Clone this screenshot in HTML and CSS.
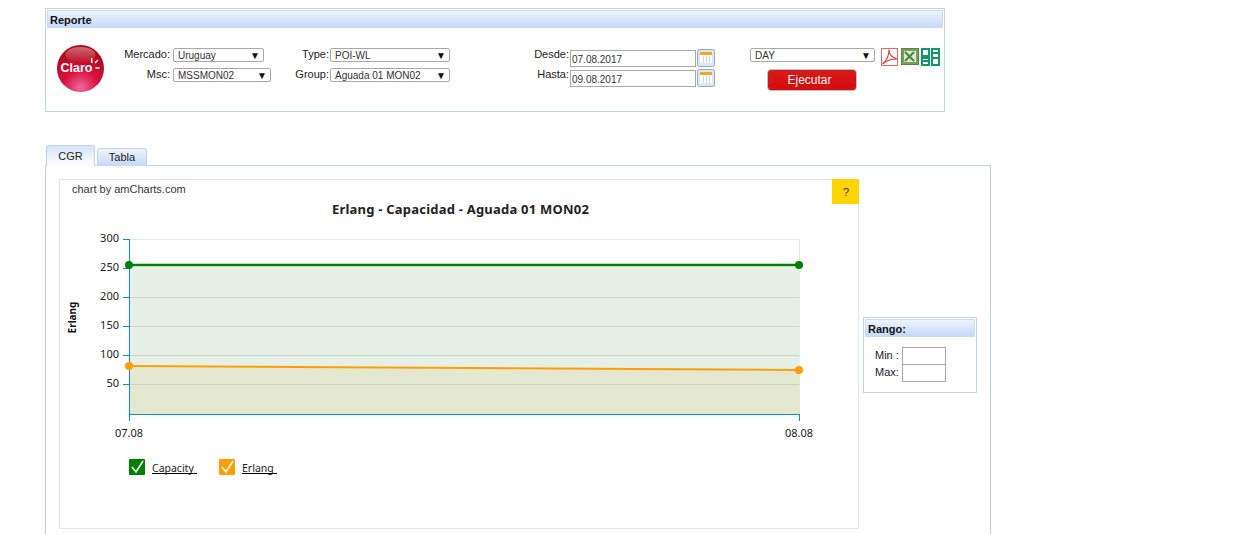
FILE: index.html
```html
<!DOCTYPE html>
<html lang="es">
<head>
    <meta charset="UTF-8">
    <title>Reporte</title>
    <link rel="stylesheet" href="styles.css">
</head>
<body>
<div id="reporte" class="panel">
    <div class="panel_head">Reporte</div>
    <div class="filtros">
        <svg class="logo" width="47" height="47" viewBox="0 0 47 47">
            <defs>
                <radialGradient id="rojo" cx="50%" cy="90%" r="75%">
                    <stop offset="0" stop-color="#f0689a"/>
                    <stop offset="0.5" stop-color="#d80f3a"/>
                    <stop offset="1" stop-color="#b00a1e"/>
                </radialGradient>
                <linearGradient id="brillo" x1="0" y1="0" x2="0" y2="1">
                    <stop offset="0" stop-color="#fff" stop-opacity="0.4"/>
                    <stop offset="1" stop-color="#fff" stop-opacity="0"/>
                </linearGradient>
            </defs>
            <circle cx="23.500" cy="23.500" r="23.500" fill="url(#rojo)"/>
            <ellipse cx="23.500" cy="10" rx="15" ry="8" fill="url(#brillo)"/>
            <text x="3.500" y="27" class="logo_txt">Claro</text>
            <path d="M34.700 13v5M38 18l3-3M38.500 23h4" stroke="#fff" stroke-width="1.500" fill="none"/>
        </svg>
        <div class="campos campos_mercado">
            <label>Mercado:</label>
            <div class="combo combo_a"><span>Uruguay</span><i>▼</i></div>
            <label>Msc:</label>
            <div class="combo combo_b"><span>MSSMON02</span><i>▼</i></div>
        </div>
        <div class="campos campos_type">
            <label>Type:</label>
            <div class="combo combo_c"><span>POI-WL</span><i>▼</i></div>
            <label>Group:</label>
            <div class="combo combo_c"><span>Aguada 01 MON02</span><i>▼</i></div>
        </div>
        <div class="campos campos_fecha">
            <label>Desde:</label>
            <div class="fecha">
                <input type="text" value="07.08.2017">
                <svg class="cal" width="18" height="18" viewBox="0 0 18 18">
                    <rect x="0.500" y="0.500" width="17" height="17" rx="2" fill="#dbe7f5" stroke="#8fa8c6"/>
                    <rect x="3" y="3" width="12" height="3" fill="#f6a623"/>
                    <rect x="3" y="6" width="12" height="8" fill="#fff"/>
                    <path d="M6.500 7v7M9.500 7v7M12.500 7v7" stroke="#c8d8ec"/>
                </svg>
            </div>
            <label>Hasta:</label>
            <div class="fecha">
                <input type="text" value="09.08.2017">
                <svg class="cal" width="18" height="18" viewBox="0 0 18 18">
                    <rect x="0.500" y="0.500" width="17" height="17" rx="2" fill="#dbe7f5" stroke="#8fa8c6"/>
                    <rect x="3" y="3" width="12" height="3" fill="#f6a623"/>
                    <rect x="3" y="6" width="12" height="8" fill="#fff"/>
                    <path d="M6.500 7v7M9.500 7v7M12.500 7v7" stroke="#c8d8ec"/>
                </svg>
            </div>
        </div>
        <div class="acciones">
            <div class="combo combo_d"><span>DAY</span><i>▼</i></div>
            <button class="ejecutar">Ejecutar</button>
        </div>
        <div class="iconos">
            <svg width="17" height="18" viewBox="0 0 17 18">
                <rect x="0.500" y="0.500" width="16" height="17" fill="#fff" stroke="#e86868"/>
                <path d="M1.500 16C5 13 8 8 8 1.500c0 5 3 8 8 9.500-5 0-10 1-14.500 5z" fill="none" stroke="#e83838" stroke-width="1.100"/>
            </svg>
            <svg width="18" height="17" viewBox="0 0 18 17">
                <rect x="0.500" y="0.500" width="17" height="16" fill="#7a9e5c" stroke="#5c8542"/>
                <rect x="3" y="3" width="12" height="11" fill="#dfe8d4"/>
                <path d="M4 4l9 9M13 4l-9 9" stroke="#3f8a40" stroke-width="2"/>
            </svg>
            <svg class="icono_grid" width="19" height="18" viewBox="0 0 19 18">
                <path d="M1 1h7v7H1zM11 1h7v4h-7zM11 5h7v5h-7zM1 10h7v3H1zM1 13h7v4H1zM11 10h7v7h-7z" fill="#fff" stroke="#0f9868" stroke-width="2"/>
            </svg>
        </div>
    </div>
</div>

<div class="tabs">
    <div class="tab tab_on">CGR</div>
    <div class="tab">Tabla</div>
</div>
<div class="tab_pane">
    <div class="chart">
        <a class="ayuda">?</a>
        <svg class="chart_svg" width="798" height="348" viewBox="60 180 798 348">
            <text x="72" y="193" class="credito">chart by amCharts.com</text>
            <text x="460.500" y="214" class="titulo" text-anchor="middle">Erlang - Capacidad - Aguada 01 MON02</text>

            <path d="M129.500 239.500H799.500V414" fill="none" stroke="#e6e6e6"/>
            <rect x="130" y="267" width="670" height="147" fill="#e6f0e6"/>
            <path d="M130 367L800 371V414H130z" fill="#e5e8d0"/>
            <path d="M130 297.500H799M130 326.500H799M130 355.500H799M130 384.500H799" stroke="#000" stroke-opacity="0.1"/>

            <path d="M123 239.500H129.500M123 268.500H129.500M123 297.500H129.500M123 326.500H129.500M123 355.500H129.500M123 384.500H129.500" stroke="#0d8ecf"/>
            <path d="M129.500 239V421M129 414.500H800M799.500 414V421" fill="none" stroke="#0d8ecf"/>

            <path d="M129 265H799" stroke="#008000" stroke-width="2.500"/>
            <path d="M129 366L799 370" stroke="#ff9e01" stroke-width="2"/>
            <circle cx="129" cy="265" r="4" fill="#008000"/>
            <circle cx="799" cy="265" r="4" fill="#008000"/>
            <circle cx="129" cy="366" r="4" fill="#ff9e01"/>
            <circle cx="799" cy="370" r="4" fill="#ff9e01"/>

            <text x="119" y="242" class="eje" text-anchor="end">300</text>
            <text x="119" y="271" class="eje" text-anchor="end">250</text>
            <text x="119" y="300" class="eje" text-anchor="end">200</text>
            <text x="119" y="329" class="eje" text-anchor="end">150</text>
            <text x="119" y="358" class="eje" text-anchor="end">100</text>
            <text x="119" y="387" class="eje" text-anchor="end">50</text>
            <text x="129" y="437" class="eje" text-anchor="middle">07.08</text>
            <text x="799" y="437" class="eje" text-anchor="middle">08.08</text>
            <text transform="translate(76 317.500) rotate(-90)" class="eje_nombre" text-anchor="middle">Erlang</text>

            <rect x="129" y="459" width="16" height="16" rx="1" fill="#008000"/>
            <path d="M132 467l4 5 7-11" fill="none" stroke="#fff" stroke-width="1.600"/>
            <text x="152" y="472" class="leyenda">Capacity </text>
            <path d="M152 473.500H197" stroke="#000"/>
            <rect x="219" y="459" width="16" height="16" rx="1" fill="#ff9e01"/>
            <path d="M222 467l4 5 7-11" fill="none" stroke="#fff" stroke-width="1.600"/>
            <text x="242" y="472" class="leyenda">Erlang </text>
            <path d="M242 473.500H277" stroke="#000"/>
        </svg>
    </div>
    <div id="rango" class="panel">
        <div class="panel_head">Rango:</div>
        <div class="rango_campos">
            <label>Min :</label><input type="text">
            <label>Max:</label><input type="text">
        </div>
    </div>
</div>
</body>
</html>
```

FILE: styles.css
```css
*{
    margin: 0;
    padding: 0;
    box-sizing: border-box;
}
html,body{
    height: 534px;
    overflow: hidden;
}
body{
    background-color: #fff;
    font-family: "Liberation Sans", Arial, sans-serif;
    font-size: 12px;
    color: #222;
    padding: 8px 0 0 45px;
}
.panel{
    border: 1px solid #bdd4f2;
    padding: 1px;
    background-color: #fff;
}
.panel_head{
    height: 18px;
    line-height: 18px;
    padding-left: 2px;
    font-size: 11px;
    font-weight: bold;
    color: #111;
    background: linear-gradient(#eef4fd, #c4d9f7);
    border: 1px solid #c9dcf6;
}
#reporte{
    width: 900px;
    height: 104px;
}
.filtros{
    display: flex;
    align-items: flex-start;
    padding: 17px 0 0 10px;
}
.logo{
    flex: none;
    margin-right: 18px;
}
.logo_txt{
    font-family: "Liberation Sans", Arial, sans-serif;
    font-size: 12.500px;
    font-weight: bold;
    fill: #fff;
}
.campos{
    display: grid;
    align-items: center;
    row-gap: 6px;
    padding-top: 3px;
}
.campos label{
    text-align: right;
    font-size: 11px;
    line-height: 14px;
    white-space: nowrap;
    margin-top: -2px;
}
.campos_mercado{
    grid-template-columns: 48px auto;
    column-gap: 3px;
    justify-items: start;
}
.campos_mercado label{
    justify-self: end;
}
.campos_type{
    grid-template-columns: 58px 120px;
    column-gap: 1px;
}
.combo{
    height: 14px;
    border: 1px solid #a9a9a9;
    border-radius: 2px;
    background-color: #fff;
    display: flex;
    justify-content: space-between;
    align-items: center;
    padding: 0 3px 0 4px;
    font-size: 10px;
    color: #333;
}
.combo span{
    padding-top: 1px;
}
.combo i{
    font-style: normal;
    font-size: 10px;
    color: #111;
}
.combo_a{
    width: 91px;
}
.combo_b{
    width: 98px;
}
.combo_c{
    width: 120px;
}
.combo_d{
    width: 125px;
}
.campos_fecha{
    grid-template-columns: 40px auto;
    column-gap: 1px;
    row-gap: 2px;
    align-items: start;
    margin-left: 79px;
    padding-top: 4px;
}
.campos_fecha label{
    margin-top: -2px;
}
.fecha{
    display: flex;
    align-items: flex-start;
    gap: 1px;
}
.fecha input{
    width: 126px;
    height: 17px;
    margin-top: 1px;
    border: 1px solid #a9a9a9;
    padding: 2px 0 0 1px;
    font-family: "Liberation Sans", Arial, sans-serif;
    font-size: 10px;
    color: #333;
    outline: none;
}
.cal{
    flex: none;
}
.acciones{
    margin-left: 35px;
    padding-top: 3px;
    display: flex;
    flex-direction: column;
    align-items: center;
    gap: 7px;
}
.ejecutar{
    width: 90px;
    height: 22px;
    margin-right: 1px;
    padding: 0 5px 1px 0;
    border: 1px solid #b0c4d8;
    border-radius: 4px;
    background: linear-gradient(#d81a1a, #d40c0c);
    color: #f4f4f4;
    font-family: "Liberation Sans", Arial, sans-serif;
    font-size: 12px;
}
.iconos{
    display: flex;
    align-items: flex-start;
    gap: 3px;
    margin-left: 6px;
    padding-top: 3px;
}
.icono_grid{
    margin-left: -1px;
}
.tabs{
    display: flex;
    align-items: flex-end;
    gap: 2px;
    height: 21px;
    margin: 33px 0 -1px 1px;
    position: relative;
}
.tab{
    width: 50px;
    height: 18px;
    line-height: 17px;
    text-align: center;
    font-size: 11px;
    color: #222;
    border: 1px solid #bdd4f2;
    border-bottom: none;
    border-radius: 3px 3px 0 0;
    background: linear-gradient(#eef4fd, #c4d9f7);
}
.tab_on{
    width: 49px;
    height: 21px;
    line-height: 20px;
    background: linear-gradient(#d4e4fa, #fff);
}
.tab_pane{
    width: 946px;
    height: 369px;
    border: 1px solid #bdd4f2;
    border-bottom: none;
    padding: 13px 0 0 13px;
    display: flex;
    align-items: flex-start;
}
.chart{
    flex: none;
    width: 800px;
    height: 350px;
    border: 1px solid #e6e6e6;
    position: relative;
}
.chart_svg{
    display: block;
}
.ayuda{
    position: absolute;
    top: -1px;
    right: -1px;
    width: 27px;
    height: 25px;
    line-height: 26px;
    padding-left: 1px;
    text-align: center;
    font-size: 11px;
    color: #333;
    background-color: #ffd400;
}
.credito{
    font-family: "Liberation Sans", Arial, sans-serif;
    font-size: 11px;
    fill: #333;
}
.titulo{
    font-family: "Noto Sans", Tahoma, sans-serif;
    font-size: 13px;
    font-weight: bold;
    letter-spacing: 0.22px;
    fill: #222;
}
.eje{
    font-family: "Noto Sans", Tahoma, sans-serif;
    font-size: 11px;
    fill: #222;
}
.eje_nombre{
    font-family: "Noto Sans", Tahoma, sans-serif;
    font-size: 10px;
    font-weight: bold;
    fill: #111;
}
.leyenda{
    font-family: "Noto Sans", Tahoma, sans-serif;
    font-size: 10.500px;
    fill: #222;
}
#rango{
    width: 114px;
    height: 76px;
    margin: 138px 0 0 4px;
}
.rango_campos{
    display: grid;
    grid-template-columns: 25px 44px;
    column-gap: 2px;
    align-items: center;
    padding: 10px 0 0 10px;
}
.rango_campos label{
    font-size: 11px;
    color: #222;
    white-space: nowrap;
    margin-top: -2px;
}
.rango_campos input{
    width: 44px;
    height: 18px;
    margin-bottom: -1px;
    border: 1px solid #a9a9a9;
    outline: none;
}
```
